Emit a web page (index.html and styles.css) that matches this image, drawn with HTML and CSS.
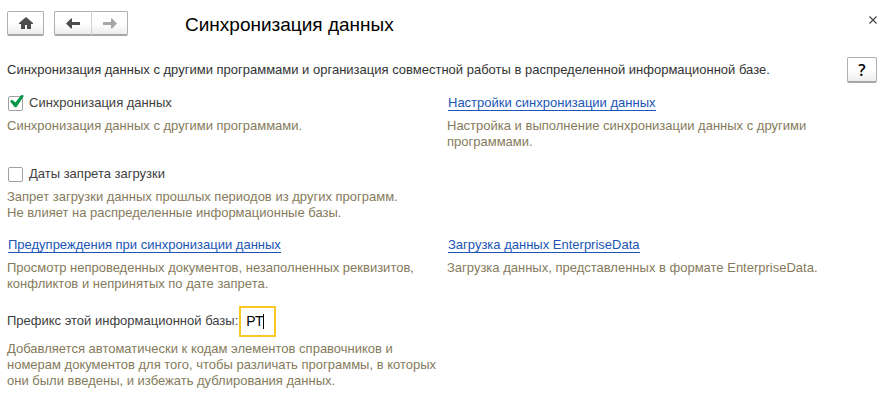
FILE: index.html
```html
<!DOCTYPE html>
<html lang="ru">
<head>
    <meta charset="UTF-8">
    <meta name="viewport" content="width=device-width, initial-scale=1.0">
    <title>Синхронизация данных</title>
    <link rel="stylesheet" href="styles.css">
</head>
<body>
    <header class="toolbar">
        <button type="button" class="btn home" aria-label="Домой">
            <svg width="16" height="14" viewBox="0 0 16 14"><path d="M8 1 L15 7 V8 H13 V13 H9 V9 H7 V13 H3 V8 H1 V7 Z" fill="#4d4d4d"/></svg>
        </button>
        <div class="nav-group">
            <button type="button" class="btn back" aria-label="Назад">
                <svg width="14" height="11" viewBox="0 0 14 11"><path d="M0 5.5 L5 0.5 H6 V4 H14 V7 H6 V10.5 H5 Z" fill="#4d4d4d"/></svg>
            </button>
            <button type="button" class="btn forward" aria-label="Вперед">
                <svg width="14" height="11" viewBox="0 0 14 11"><path d="M14 5.5 L9 0.5 H8 V4 H0 V7 H8 V10.5 H9 Z" fill="#a6a6a6"/></svg>
            </button>
        </div>
        <h1>Синхронизация данных</h1>
        <button type="button" class="close" aria-label="Закрыть">
            <svg width="8" height="8" viewBox="0 0 8 8"><path d="M0.5 0.5 L7.5 7.5 M7.5 0.5 L0.5 7.5" stroke="#444" stroke-width="1.2"/></svg>
        </button>
    </header>

    <main>
        <div class="intro">
            <p>Синхронизация данных с другими программами и организация совместной работы в распределенной информационной базе.</p>
            <button type="button" class="btn help">?</button>
        </div>

        <div class="settings">
            <section>
                <div class="row">
                    <input type="checkbox" id="sync" checked>
                    <label for="sync">Синхронизация данных</label>
                </div>
                <p class="hint">Синхронизация данных с другими программами.</p>
            </section>
            <section>
                <div class="row"><a href="#">Настройки синхронизации данных</a></div>
                <p class="hint">Настройка и выполнение синхронизации данных с другими<br>программами.</p>
            </section>
            <section class="wide">
                <div class="row">
                    <input type="checkbox" id="dates">
                    <label for="dates">Даты запрета загрузки</label>
                </div>
                <p class="hint">Запрет загрузки данных прошлых периодов из других программ.<br>Не влияет на распределенные информационные базы.</p>
            </section>
            <section>
                <div class="row"><a href="#">Предупреждения при синхронизации данных</a></div>
                <p class="hint">Просмотр непроведенных документов, незаполненных реквизитов,<br>конфликтов и непринятых по дате запрета.</p>
            </section>
            <section>
                <div class="row"><a href="#">Загрузка данных EnterpriseData</a></div>
                <p class="hint">Загрузка данных, представленных в формате EnterpriseData.</p>
            </section>
            <section>
                <div class="row field">
                    <label for="prefix">Префикс этой информационной базы:</label>
                    <input type="text" id="prefix" value="РТ">
                </div>
                <p class="hint">Добавляется автоматически к кодам элементов справочников и<br>номерам документов для того, чтобы различать программы, в которых<br>они были введены, и избежать дублирования данных.</p>
            </section>
        </div>
    </main>
</body>
</html>
```
FILE: styles.css
```css
* {
    box-sizing: border-box;
}
body {
    margin: 0;
    padding: 11px 13px 20px 7px;
    background: #fff;
    color: #404040;
    font-family: "Liberation Sans", Arial, sans-serif;
    font-size: 13px;
    line-height: 16px;
}
p,
h1 {
    margin: 0;
}
.toolbar {
    display: flex;
    align-items: center;
}
.btn {
    display: flex;
    align-items: center;
    justify-content: center;
    width: 37px;
    height: 25px;
    padding: 0;
    border: 1px solid #b0b0b0;
    border-bottom: 2px solid #a6a6a6;
    border-radius: 2px;
    background: linear-gradient(#fff 50%, #ededed);
}
.nav-group {
    display: flex;
    margin-left: 10px;
}
.back {
    width: 38px;
    border-right-color: #d0d0d0;
    border-radius: 2px 0 0 2px;
}
.forward {
    width: 36px;
    border-left: 0;
    border-radius: 0 2px 2px 0;
}
h1 {
    flex: 1;
    margin-left: 57px;
    padding-top: 2px;
    color: #000;
    font-size: 19px;
    font-weight: normal;
    line-height: 23px;
}
.close {
    display: flex;
    align-self: flex-start;
    padding: 5px 0;
    border: 0;
    background: none;
}
.intro {
    display: flex;
    align-items: center;
    justify-content: space-between;
    margin-top: 21px;
    color: #333;
}
.help {
    width: 30px;
    height: 26px;
    color: #000;
    font-family: "Open Sans", sans-serif;
    font-size: 16px;
    font-weight: 600;
}
.settings {
    display: grid;
    grid-template-columns: 1fr 1fr;
    gap: 14px 10px;
    margin-top: 10px;
}
.wide {
    grid-column: 1 / -1;
}
.row {
    display: flex;
    align-items: center;
    height: 20px;
}
.hint {
    margin-top: 5px;
    color: #857b5c;
}
a {
    margin-left: 1px;
    border-bottom: 1px solid #2155b5;
    color: #2155b5;
    line-height: 15px;
    text-decoration: none;
}
input[type="checkbox"] {
    appearance: none;
    width: 15px;
    height: 15px;
    margin: 0 6px 0 1px;
    border: 1px solid #a0a0a0;
    border-radius: 2px;
    background: #fff;
}
input[type="checkbox"]:checked {
    position: relative;
}
input[type="checkbox"]:checked::after {
    content: "";
    position: absolute;
    top: -2px;
    left: 1px;
    width: 14px;
    height: 13px;
    background: #009846;
    clip-path: polygon(0 52%, 16% 40%, 38% 62%, 82% 2%, 100% 10%, 46% 98%, 34% 98%);
}
.field {
    height: 30px;
}
/* the text cursor is drawn as a background line after the value */
input[type="text"] {
    width: 37px;
    height: 31px;
    margin-left: 1px;
    padding: 0 5px;
    border: 2px solid #f9c922;
    background: linear-gradient(#000, #000) 22px center / 1px 15px no-repeat #fff;
    color: #000;
    font-family: inherit;
    font-size: 14px;
    outline: none;
}
```
